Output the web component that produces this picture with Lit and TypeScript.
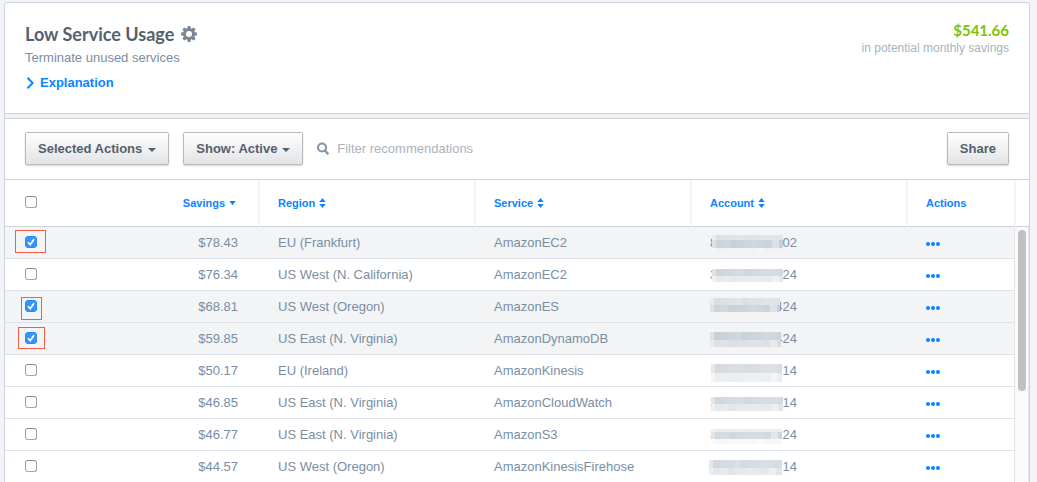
import { LitElement, html, css, svg, nothing } from "lit";
import { customElement, property, state } from "lit/decorators.js";

interface Recommendation {
  savings: string;
  region: string;
  service: string;
  lead: string;
  tail: string;
  selected: boolean;
  mark: string;
  mask: Mask;
}

// A redaction: left and right edge, then horizontal bands of [top, bottom, colour].
interface Mask {
  from: number;
  to: number;
  bands: [number, number, string][];
}

const RECOMMENDATIONS: Recommendation[] = [
  { savings: "$78.43", region: "EU (Frankfurt)", service: "AmazonEC2", lead: "8", tail: "02", selected: true, mark: "wide",
    mask: { from: 3, to: 74, bands: [[8, 13, "#dce1e6"], [13, 21, "#c5ced7"], [21, 25, "#eff1f3"]] } },
  { savings: "$76.34", region: "US West (N. California)", service: "AmazonEC2", lead: "3", tail: "24", selected: false, mark: "",
    mask: { from: 3, to: 74, bands: [[10, 17, "#ccd4dc"], [17, 23, "#e4e7eb"]] } },
  { savings: "$68.81", region: "US West (Oregon)", service: "AmazonES", lead: "", tail: "424", selected: true, mark: "narrow",
    mask: { from: 1, to: 71, bands: [[7, 14, "#dadfe4"], [14, 21, "#c7cfd7"]] } },
  { savings: "$59.85", region: "US East (N. Virginia)", service: "AmazonDynamoDB", lead: "", tail: "424", selected: true, mark: "medium",
    mask: { from: 1, to: 72, bands: [[9, 17, "#c6cfd7"], [17, 24, "#d8dde2"]] } },
  { savings: "$50.17", region: "EU (Ireland)", service: "AmazonKinesis", lead: "", tail: "14", selected: false, mark: "",
    mask: { from: 2, to: 73, bands: [[9, 18, "#d5dadf"], [18, 27, "#eaedf0"]] } },
  { savings: "$46.85", region: "US East (N. Virginia)", service: "AmazonCloudWatch", lead: "3", tail: "14", selected: false, mark: "",
    mask: { from: 2, to: 74, bands: [[10, 17, "#cfd7de"], [17, 24, "#e2e6ea"]] } },
  { savings: "$46.77", region: "US East (N. Virginia)", service: "AmazonS3", lead: "3", tail: "24", selected: false, mark: "",
    mask: { from: 2, to: 73, bands: [[10, 13, "#e9ecef"], [13, 20, "#ced5dd"], [20, 25, "#f6f7f9"]] } },
  { savings: "$44.57", region: "US West (Oregon)", service: "AmazonKinesisFirehose", lead: "", tail: "14", selected: false, mark: "",
    mask: { from: 0, to: 73, bands: [[9, 17, "#d1d8e0"], [17, 24, "#e1e5e9"]] } },
];

const SHADES = [0.4, 0, 0.08, 0.12, 0.18, 0.06, 0.1, 0.14, 0.2, 0.16, 0.1];

@customElement("check-box")
class CheckBox extends LitElement {
  @property({ type: Boolean }) checked = false;
  @property() label = "";
  @property() mark = "";

  static styles = css`
    :host { display: block; }
    .box { position: relative; display: grid; width: 12px; height: 12px; }
    .input, .tick { grid-area: 1 / 1; }
    .input {
      appearance: none; margin: 0; width: 12px; height: 12px; box-sizing: border-box;
      border: 1px solid #a3a3a3; border-top-color: #8c8c8c; border-radius: 3px; background: #fff;
    }
    .input:checked { border-color: #2a8cf8; background: #3294fc; }
    .tick { display: none; pointer-events: none; z-index: 1; }
    .input:checked + .tick { display: block; }
    .mark { position: absolute; box-sizing: border-box; border: 1px solid #fb5a43; pointer-events: none; }
    .wide { inset: -6px -9px -5px -10px; }
    .narrow { inset: -3px -5px -8px -4px; }
    .medium { inset: -5px -8px -5px -7px; }
  `;

  render() {
    return html`<label class="box">
      <input class="input" type="checkbox" aria-label=${this.label} .checked=${this.checked}
        @change=${(e: Event) => {
          this.checked = (e.target as HTMLInputElement).checked;
          this.dispatchEvent(new CustomEvent("toggle", { detail: this.checked }));
        }} />
      <svg class="tick" width="12" height="12" viewBox="0 0 12 12" aria-hidden="true">
        <path d="M3 6.2 5.2 8.6 9 3.2" fill="none" stroke="#fff" stroke-width="1.7" />
      </svg>
      ${this.mark ? html`<span class="mark ${this.mark}"></span>` : nothing}
    </label>`;
  }
}

@customElement("account-number")
class AccountNumber extends LitElement {
  @property() lead = "";
  @property() tail = "";
  @property({ attribute: false }) mask!: Mask;

  static styles = css`
    :host { display: block; }
    .number { position: relative; display: flex; justify-content: space-between; width: 87px; height: 31px; line-height: 31px; }
    .mask { position: absolute; top: 0; left: -1px; }
  `;

  render() {
    const { from, to, bands } = this.mask;
    const cells = [];
    for (const [b, [top, bottom, colour]] of bands.entries()) {
      cells.push(svg`<rect x=${from} y=${top} width=${to - from} height=${bottom - top} fill=${colour} />`);
      let i = 0;
      for (let x = from; x < to; i++) {
        const end = Math.min(to, i === 0 ? from + 4 : x + 7);
        cells.push(svg`<rect x=${x} y=${top} width=${end - x} height=${bottom - top} fill="#fff"
          opacity=${SHADES[(i === 0 ? 0 : i + b * 2) % SHADES.length]} />`);
        x = end;
      }
    }
    return html`<span class="number"><span>${this.lead}</span><span>${this.tail}</span>
      <svg class="mask" width="80" height="31" shape-rendering="crispEdges" aria-hidden="true">${cells}</svg></span>`;
  }
}

@customElement("app-root")
class AppRoot extends LitElement {
  @state() private rows = RECOMMENDATIONS;

  static styles = css`
    :host {
      display: block; box-sizing: border-box; min-height: 100vh; padding: 2px 7px 0 4px;
      background: #f3f4f7; color: #798ea3;
      font: 13px/16px "Liberation Sans", Arial, Helvetica, sans-serif;
    }
    .card { border: 1px solid #ced4dc; border-bottom: 0; border-radius: 3px 3px 0 0; background: #fff; }
    .header { display: flex; justify-content: space-between; padding: 20px 20px 22px; }
    .heading { display: flex; align-items: center; gap: 7px; height: 22px; }
    .title { margin: 0; font: bold 18px/22px Lato, sans-serif; color: #54616d; }
    .icon-button { display: flex; padding: 0; border: 0; background: none; cursor: pointer; }
    .subtitle { margin: 5px 0 9px; }
    .explanation { display: flex; align-items: center; gap: 6px; color: #0a84ff; font-weight: bold; text-decoration: none; }
    .total { text-align: right; }
    .amount { margin: 0; font: bold 15px/15px Lato, sans-serif; color: #7cc400; }
    .caption { margin: 2px 0 0; font-size: 12px; color: #a6b4c2; }
    .strip { height: 4px; border: solid #ced4dc; border-width: 1px 0; background: #eff1f3; }
    .toolbar { display: flex; align-items: center; gap: 14px; padding: 13px 20px 14px; border-bottom: 1px solid #ced4dc; }
    .button {
      box-sizing: border-box; height: 33px; padding: 0 12px; border: 1px solid #b9bcbf; border-radius: 2px;
      background: linear-gradient(#fff, #e1e3e6); box-shadow: 0 1px 2px rgba(0, 0, 0, 0.18);
      color: #54616d; font: bold 13px/16px "Liberation Sans", Arial, sans-serif; cursor: pointer;
    }
    .menu { display: flex; align-items: center; gap: 6px; }
    .picker { display: grid; align-items: center; }
    .picker > * { grid-area: 1 / 1; }
    .picker .caret { justify-self: end; margin-right: 13px; pointer-events: none; }
    .select { appearance: none; width: 120px; }
    .caret { margin-top: 3px; }
    .search { display: flex; flex: 1; align-items: center; gap: 8px; }
    .query { flex: 1; min-width: 0; padding: 0; border: 0; outline: 0; background: none; color: #54616d; font: inherit; }
    .query::placeholder { color: #a9b3bf; opacity: 1; }
    .table { width: 100%; table-layout: fixed; border-collapse: separate; border-spacing: 0; }
    .col-check { width: 39px; }
    .col-actions { width: 106px; }
    .col-scroll { width: 15px; }
    th, td { box-sizing: border-box; padding: 0 18px; text-align: left; white-space: nowrap; }
    th { height: 47px; border-bottom: 1px solid #ced4dc; font-size: 11px; color: #0a84ff; }
    td { height: 32px; border-bottom: 1px solid #dfe2e9; line-height: 31px; }
    tbody tr:last-child td { height: 31px; border-bottom: 0; }
    .selected td { background: #f3f4f6; }
    .check { padding: 0 0 2px 20px; }
    .savings { padding-right: 22px; text-align: right; }
    th.ruled { border-right: 2px solid #f3f4f6; }
    th.end { padding: 0; border-left: 2px solid #f3f4f6; }
    .sort {
      display: inline-flex; align-items: center; gap: 4px; padding: 0; border: 0; background: none;
      color: inherit; font: inherit; line-height: 16px; cursor: pointer;
    }
    tbody td.track { padding: 3px 3px 0; border: solid #e4e5e7; border-width: 0 1px; vertical-align: top; background: #fafafa; }
    .thumb { width: 8px; height: 161px; border-radius: 4px; background: #c1c1c1; }
  `;

  private caret() {
    return html`<svg class="caret" width="8" height="4" viewBox="0 0 8 4" aria-hidden="true"><path d="M0 0h8L4 4z" fill="#54616d" /></svg>`;
  }

  private sortable(label: string) {
    return html`<button class="sort">${label}
      <svg width="7" height="10" viewBox="0 0 7 10" aria-hidden="true"><path d="M0.3 4h6.4L3.5 0zM0.3 6h6.4L3.5 10z" fill="#0a84ff" /></svg>
    </button>`;
  }

  private setSelected(index: number, selected: boolean) {
    this.rows = this.rows.map((row, i) => (i === index ? { ...row, selected } : row));
  }

  render() {
    return html`<main class="card">
      <header class="header">
        <div>
          <div class="heading">
            <h1 class="title">Low Service Usage</h1>
            <button class="icon-button" aria-label="Settings">
              <svg width="16" height="16" viewBox="-8 -8 16 16" aria-hidden="true">
                <g fill="#7b8793">
                  ${[0, 45, 90, 135].map((a) => svg`<path d="M-1.3-8h2.6L2-5v10L1.3 8h-2.6L-2 5V-5z" transform="rotate(${a})" />`)}
                  <circle r="5.8" />
                </g>
                <circle r="3" fill="#fff" />
              </svg>
            </button>
          </div>
          <p class="subtitle">Terminate unused services</p>
          <a class="explanation" href="#explanation">
            <svg width="9" height="12" viewBox="0 0 9 12" aria-hidden="true"><path d="M2.5 .8 7.7 6 2.5 11.2" fill="none" stroke="#0a84ff" stroke-width="2" /></svg>
            Explanation
          </a>
        </div>
        <div class="total">
          <p class="amount">$541.66</p>
          <p class="caption">in potential monthly savings</p>
        </div>
      </header>
      <div class="strip"></div>
      <div class="toolbar">
        <button class="button menu" aria-haspopup="menu">Selected Actions ${this.caret()}</button>
        <div class="picker">
          <select class="button select" aria-label="Show">
            <option>Show: Active</option>
          </select>
          ${this.caret()}
        </div>
        <label class="search">
          <svg width="12" height="13" viewBox="0 0 12 13" aria-hidden="true">
            <circle cx="5" cy="5.5" r="4" fill="none" stroke="#8093a6" stroke-width="2" />
            <path d="M7.8 8.5 11.3 12.2" stroke="#8093a6" stroke-width="2.2" />
          </svg>
          <input class="query" type="text" placeholder="Filter recommendations" aria-label="Filter recommendations" />
        </label>
        <button class="button">Share</button>
      </div>
      <table class="table">
        <colgroup>
          <col class="col-check" /><col /><col /><col /><col /><col class="col-actions" /><col class="col-scroll" />
        </colgroup>
        <thead>
          <tr>
            <th class="check"><check-box label="Select all"></check-box></th>
            <th class="savings ruled">
              <button class="sort">Savings
                <svg width="7" height="5" viewBox="0 0 7 5" aria-hidden="true"><path d="M0.3 0h6.4L3.5 4.3z" fill="#0a84ff" /></svg>
              </button>
            </th>
            <th class="ruled">${this.sortable("Region")}</th>
            <th class="ruled">${this.sortable("Service")}</th>
            <th class="ruled">${this.sortable("Account")}</th>
            <th>Actions</th>
            <th class="end"></th>
          </tr>
        </thead>
        <tbody>
          ${this.rows.map((row, i) => html`<tr class=${row.selected ? "selected" : ""}>
            <td class="check">
              <check-box label="Select ${row.service} in ${row.region}" .checked=${row.selected} mark=${row.mark}
                @toggle=${(e: CustomEvent<boolean>) => this.setSelected(i, e.detail)}></check-box>
            </td>
            <td class="savings">${row.savings}</td>
            <td>${row.region}</td>
            <td>${row.service}</td>
            <td><account-number lead=${row.lead} tail=${row.tail} .mask=${row.mask}></account-number></td>
            <td>
              <button class="icon-button" aria-label="Actions for ${row.service}">
                <svg width="14" height="7" viewBox="0 0 14 7" aria-hidden="true">
                  <g fill="#0a84ff"><circle cx="2" cy="5" r="2" /><circle cx="7" cy="5" r="2" /><circle cx="12" cy="5" r="2" /></g>
                </svg>
              </button>
            </td>
            ${i === 0 ? html`<td class="track" rowspan=${this.rows.length}><div class="thumb"></div></td>` : nothing}
          </tr>`)}
        </tbody>
      </table>
    </main>`;
  }
}
